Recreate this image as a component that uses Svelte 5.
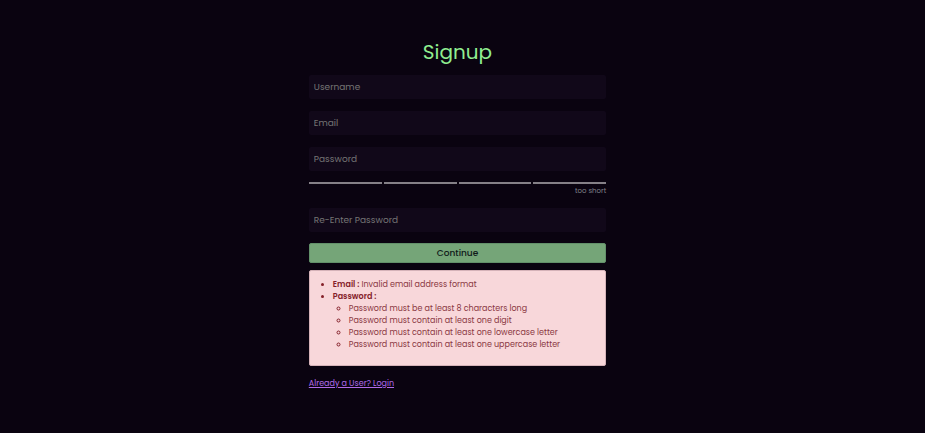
<script>
  let username = $state('');
  let email = $state('');
  let password = $state('');
  let confirm = $state('');

  const bars = [0, 1, 2, 3];
  const passwordErrors = [
    'Password must be at least 8 characters long',
    'Password must contain at least one digit',
    'Password must contain at least one lowercase letter',
    'Password must contain at least one uppercase letter'
  ];
</script>

<main>
  <form onsubmit={(e) => e.preventDefault()}>
    <h1>Signup</h1>
    <input type="text" aria-label="Username" placeholder="Username" bind:value={username} />
    <input type="email" aria-label="Email" placeholder="Email" bind:value={email} />
    <input type="password" aria-label="Password" placeholder="Password" bind:value={password} />
    <div class="strength">
      <div class="bars">
        {#each bars as bar (bar)}
          <span class="bar"></span>
        {/each}
      </div>
      <p>too short</p>
    </div>
    <input type="password" aria-label="Re-Enter Password" placeholder="Re-Enter Password" bind:value={confirm} />
    <button type="submit">Continue</button>
    <div class="alert" role="alert">
      <ul>
        <li><strong>Email :</strong> Invalid email address format</li>
        <li>
          <strong>Password :</strong>
          <ul>
            {#each passwordErrors as error (error)}
              <li>{error}</li>
            {/each}
          </ul>
        </li>
      </ul>
    </div>
    <a href="#login">Already a User? Login</a>
  </form>
</main>

<style>
  :global(body) {
    margin: 0;
    background: #0a0310;
  }

  main {
    box-sizing: border-box;
    min-height: 100vh;
    padding: 36px 10px 36px 0;
    display: flex;
    justify-content: center;
    font-family: Poppins, Inter, sans-serif;
    font-size: 8px;
    line-height: 12px;
  }

  form {
    width: 32.5%;
    min-width: 297px;
    max-width: 480px;
    display: flex;
    flex-direction: column;
  }

  h1 {
    margin: 0 0 7px;
    color: #90ee90;
    font-size: 20px;
    font-weight: 400;
    line-height: 32px;
    text-align: center;
  }

  input {
    box-sizing: border-box;
    width: 100%;
    height: 24px;
    margin: 0 0 11px;
    padding: 0 5px;
    border: 0;
    border-radius: 2px;
    background: #110819;
    color: #ddd;
    font: inherit;
    font-size: 9px;
  }

  input + input {
    margin-top: 1px;
  }

  input::placeholder {
    color: #757575;
    opacity: 1;
  }

  .strength {
    margin-bottom: 11px;
  }

  .bars {
    display: flex;
    gap: 2px;
    margin-bottom: 1px;
  }

  .bar {
    flex: 1;
    height: 2px;
    background: #858087;
  }

  .strength p {
    margin: 0;
    color: #808088;
    font-size: 7px;
    text-align: right;
  }

  button {
    height: 20px;
    margin: 0 0 7px;
    padding: 0;
    border: 1px solid #63906a;
    border-radius: 2px;
    background: #75a578;
    color: #10191a;
    font: inherit;
    font-size: 9px;
    font-weight: 500;
  }

  .alert {
    padding: 8px 8px 14px;
    border: 1px solid #d5b2b8;
    border-radius: 2px;
    background: #f8d7da;
    color: #8a3842;
  }

  ul {
    margin: 0;
    padding-left: 15px;
  }

  ul ul {
    padding-left: 16px;
  }

  strong {
    color: #842029;
    font-weight: 600;
  }

  li::marker {
    color: #842029;
  }

  a {
    align-self: flex-start;
    margin-top: 12px;
    color: #b06bea;
  }
</style>
